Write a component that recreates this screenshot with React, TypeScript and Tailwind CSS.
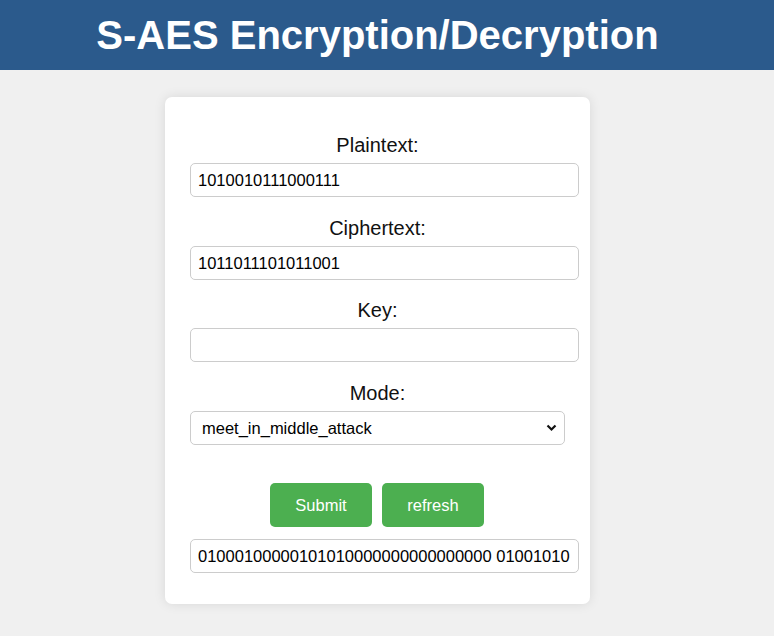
import React from "react";

export default function App() {
  const inputCls =
    "block w-[389px] h-[34px] border border-[#cccccc] rounded-[5px] px-[7px] text-[16.5px] text-black bg-white outline-none font-['Liberation_Sans',Arial,sans-serif]";
  const labelCls = "block text-center text-[20px] leading-[23px] text-[#111] mb-[6px]";
  return (
    <div className="min-h-screen bg-[#f0f0f0] font-['Liberation_Sans',Arial,sans-serif]">
      <header className="h-[70px] bg-[#2b5a8c] flex items-center justify-center pr-[19px]">
        <h1 className="text-[40px] leading-[46px] font-bold text-white">S-AES Encryption/Decryption</h1>
      </header>
      <main className="flex justify-center pr-[19px] pt-[27px] pb-[32px]">
        <div className="w-[425px] bg-white rounded-[7px] shadow-[0_0_12px_rgba(0,0,0,0.1)] px-[25px] pt-[37px] pb-[31px]">
          <label className={labelCls}>Plaintext:</label>
          <input className={inputCls} defaultValue="1010010111000111" />
          <label className={labelCls + " mt-[20px]"}>Ciphertext:</label>
          <input className={inputCls} defaultValue="1011011101011001" />
          <label className={labelCls + " mt-[19px]"}>Key:</label>
          <input className={inputCls} defaultValue="" />
          <label className={labelCls + " mt-[20px]"}>Mode:</label>
          <div className="relative w-[375px] h-[34px]">
            <select
              className="appearance-none block w-[375px] h-[34px] border border-[#cccccc] rounded-[5px] pl-[11px] pr-[30px] text-[16.5px] text-black bg-white outline-none font-['Liberation_Sans',Arial,sans-serif]"
              defaultValue="meet_in_middle_attack"
            >
              <option value="meet_in_middle_attack">meet_in_middle_attack</option>
            </select>
            <svg
              className="absolute right-[8px] top-[13px] pointer-events-none"
              width="11"
              height="8"
              viewBox="0 0 11 8"
            >
              <path d="M1.5 1.5 L5.5 5.5 L9.5 1.5" fill="none" stroke="#111" strokeWidth="2.2" />
            </svg>
          </div>
          <div className="flex justify-center gap-[10px] mt-[38px] pr-[1px]">
            <button className="w-[102px] h-[44px] bg-[#4caf50] text-white text-[16.5px] rounded-[5px]">
              Submit
            </button>
            <button className="w-[102px] h-[44px] bg-[#4caf50] text-white text-[16.5px] rounded-[5px]">
              refresh
            </button>
          </div>
          <input
            className={inputCls + " mt-[12px]"}
            defaultValue="01000100000101010000000000000000 01001010 10101100"
          />
        </div>
      </main>
    </div>
  );
}
